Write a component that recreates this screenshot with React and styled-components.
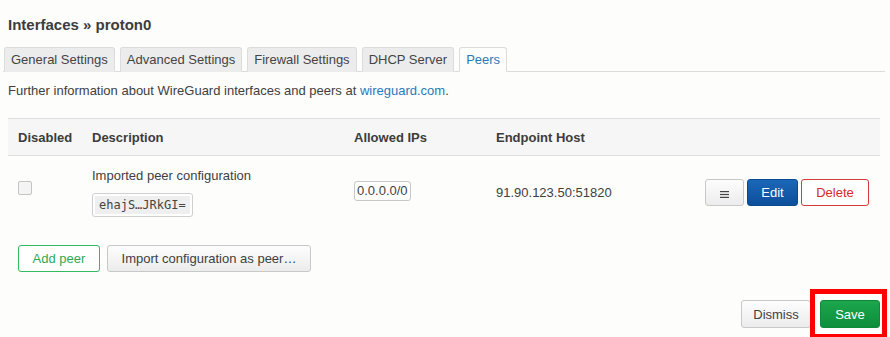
import React from 'react';
import styled, { createGlobalStyle, css } from 'styled-components';

const GlobalStyle = createGlobalStyle`
  html, body {
    margin: 0;
    padding: 0;
    background: #fdfdfc;
    font-family: "Liberation Sans", Arial, sans-serif;
    font-size: 13px;
    color: #404040;
  }
`;

const Page = styled.div`
  width: 890px;
  height: 337px;
  overflow: hidden;
`;

const Title = styled.h2`
  margin: 0;
  padding: 15px 8px 0;
  font-size: 15px;
  line-height: 20px;
  font-weight: bold;
  color: #3c3c3c;
`;

const TabBar = styled.div`
  display: flex;
  gap: 5px;
  margin: 12px 5px 0 3px;
  padding-left: 1px;
  border-bottom: 1px solid #dcdcdc;
`;

const Tab = styled.div`
  padding: 0 6px;
  height: 23px;
  line-height: 24px;
  border: 1px solid #dcdcdc;
  border-radius: 3px 3px 0 0;
  background: #ececec;
  color: #444;
  margin-bottom: -1px;
  border-bottom: 1px solid transparent;

  ${(p) =>
    p.$active &&
    css`
      background: #fdfdfc;
      color: #2a7ab8;
      border-bottom: 1px solid #fdfdfc;
    `}
`;

const Info = styled.p`
  margin: 0;
  padding: 11px 8px 0;
  line-height: 16px;
`;

const Link = styled.a`
  color: #2a7ab8;
  text-decoration: none;
`;

const Table = styled.div`
  margin: 19px 10px 0 8px;
`;

const Row = styled.div`
  display: grid;
  grid-template-columns: 74px 262px 142px 1fr auto;
  align-items: center;

  ${(p) =>
    p.$head
      ? css`
          height: 36px;
          background: #f6f6f6;
          border-top: 1px solid #dedede;
          border-bottom: 1px solid #dedede;
          font-weight: bold;
          color: #3c3c3c;
        `
      : css`
          height: 72px;
        `}
`;

const Cell = styled.div`
  padding-left: 10px;
  ${(p) =>
    p.$right &&
    css`
      padding-left: 0;
      padding-right: 11px;
    `}
`;

const Check = styled.div`
  width: 12px;
  height: 12px;
  border: 1px solid #c4c4c4;
  border-radius: 2px;
  background: #f4f4f4;
  margin-top: -8px;
`;

const DescLine = styled.div`
  line-height: 16px;
  margin-bottom: 9px;
`;

const Code = styled.span`
  display: inline-block;
  border: 1px solid #cfcfcf;
  border-radius: 3px;
  padding: 2px;
  background: #fff;
`;

const CodeInner = styled.span`
  display: inline-block;
  background: #efefef;
  padding: 0 4px;
  line-height: 18px;
  font-family: "DejaVu Sans Mono", monospace;
  font-size: 12px;
  color: #444;
`;

const IpBox = styled.span`
  display: inline-block;
  border: 1px solid #c8c8c8;
  border-radius: 3px;
  padding: 0 2px;
  line-height: 18px;
  background: #fff;
  margin-top: -2px;
`;

const Actions = styled.div`
  display: flex;
  gap: 3px;
`;

const Button = styled.button`
  display: inline-flex;
  align-items: center;
  justify-content: center;
  box-sizing: border-box;
  white-space: nowrap;
  font-family: "Liberation Sans", Arial, sans-serif;
  font-size: 13px;
  height: ${(p) => p.$h || '27px'};
  width: ${(p) => p.$w || 'auto'};
  padding: 0;
  border-radius: 3px;
  border: 1px solid #c8c8c8;
  background: linear-gradient(#fdfdfd, #ececec);
  color: #404040;
  cursor: pointer;

  ${(p) =>
    p.$kind === 'primary' &&
    css`
      background: linear-gradient(#1b67b8, #0c4f9a);
      border-color: #0c4a8f;
      color: #fff;
    `}

  ${(p) =>
    p.$kind === 'danger' &&
    css`
      background: #fff;
      border-color: #d33a3a;
      color: #d42a2a;
    `}

  ${(p) =>
    p.$kind === 'add' &&
    css`
      background: #fff;
      border-color: #35b862;
      color: #2aaa55;
    `}

  ${(p) =>
    p.$kind === 'save' &&
    css`
      background: linear-gradient(#1ca64c, #0e8e3b);
      border-color: #0f8a3a;
      color: #fff;
    `}
`;

const MenuIcon = () => (
  <svg width="9" height="7" viewBox="0 0 9 7" style={{ marginTop: 4 }}>
    <rect x="0" y="0" width="9" height="1.2" fill="#444" />
    <rect x="0" y="2.9" width="9" height="1.2" fill="#444" />
    <rect x="0" y="5.8" width="9" height="1.2" fill="#444" />
  </svg>
);

const AddBar = styled.div`
  display: flex;
  gap: 7px;
  padding: 17px 0 0 18px;
`;

const Footer = styled.div`
  display: flex;
  justify-content: flex-end;
  gap: 9px;
  padding: 28px 10px 0 0;
`;

const Highlight = styled.div`
  position: relative;
`;

const Marker = styled.div`
  position: absolute;
  left: -10px;
  top: -11px;
  width: 77px;
  height: 50px;
  box-sizing: border-box;
  border: 5px solid #f00;
  pointer-events: none;
`;

const tabs = ['General Settings', 'Advanced Settings', 'Firewall Settings', 'DHCP Server', 'Peers'];

export default function App() {
  return (
    <Page>
      <GlobalStyle />
      <Title>Interfaces » proton0</Title>
      <TabBar>
        {tabs.map((t) => (
          <Tab key={t} $active={t === 'Peers'}>
            {t}
          </Tab>
        ))}
      </TabBar>
      <Info>
        Further information about WireGuard interfaces and peers at{' '}
        <Link href="#">wireguard.com</Link>.
      </Info>

      <Table>
        <Row $head>
          <Cell>Disabled</Cell>
          <Cell>Description</Cell>
          <Cell>Allowed IPs</Cell>
          <Cell>Endpoint Host</Cell>
          <Cell />
        </Row>
        <Row>
          <Cell>
            <Check />
          </Cell>
          <Cell>
            <DescLine>Imported peer configuration</DescLine>
            <Code>
              <CodeInner>ehajS…JRkGI=</CodeInner>
            </Code>
          </Cell>
          <Cell>
            <IpBox>0.0.0.0/0</IpBox>
          </Cell>
          <Cell>91.90.123.50:51820</Cell>
          <Cell $right>
            <Actions>
              <Button $w="39px">
                <MenuIcon />
              </Button>
              <Button $kind="primary" $w="51px">Edit</Button>
              <Button $kind="danger" $w="68px">Delete</Button>
            </Actions>
          </Cell>
        </Row>
      </Table>

      <AddBar>
        <Button $kind="add" $w="82px">Add peer</Button>
        <Button $w="204px">Import configuration as peer…</Button>
      </AddBar>

      <Footer>
        <Button $w="70px" $h="28px">Dismiss</Button>
        <Highlight>
          <Button $kind="save" $w="60px" $h="28px">Save</Button>
          <Marker />
        </Highlight>
      </Footer>
    </Page>
  );
}
